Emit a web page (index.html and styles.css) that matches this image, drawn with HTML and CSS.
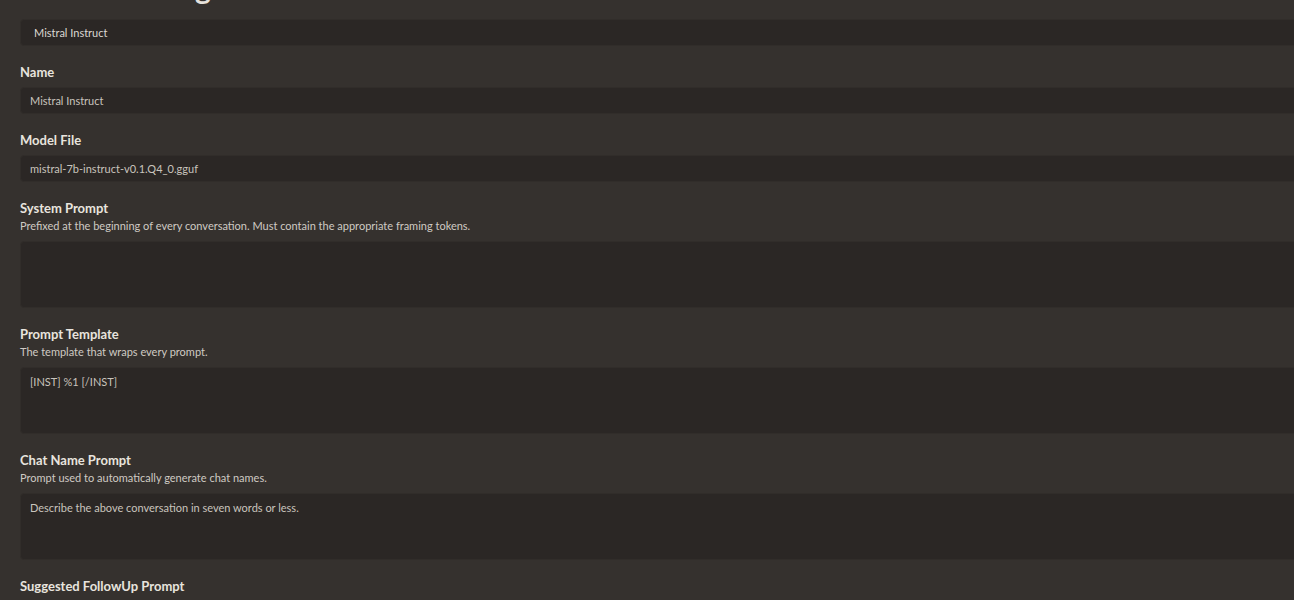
FILE: index.html
```html
<!DOCTYPE html>
<html>
<head>
<meta charset="utf-8">
<link rel="stylesheet" href="styles.css">
</head>
<body>
<main class="page">
  <h1 class="title">Model Settings</h1>
  <div class="box select">Mistral Instruct</div>

  <section class="field">
    <div class="label">Name</div>
    <div class="box">Mistral Instruct</div>
  </section>

  <section class="field">
    <div class="label">Model File</div>
    <div class="box">mistral-7b-instruct-v0.1.Q4_0.gguf</div>
  </section>

  <section class="field">
    <div class="label">System Prompt</div>
    <div class="desc">Prefixed at the beginning of every conversation. Must contain the appropriate framing tokens.</div>
    <div class="box area"></div>
  </section>

  <section class="field">
    <div class="label">Prompt Template</div>
    <div class="desc">The template that wraps every prompt.</div>
    <div class="box area">[INST] %1 [/INST]</div>
  </section>

  <section class="field">
    <div class="label">Chat Name Prompt</div>
    <div class="desc">Prompt used to automatically generate chat names.</div>
    <div class="box area">Describe the above conversation in seven words or less.</div>
  </section>

  <section class="field">
    <div class="label">Suggested FollowUp Prompt</div>
  </section>
</main>
</body>
</html>
```

FILE: styles.css
```css
html, body {
  margin: 0;
  padding: 0;
  background: #35312e;
  overflow: hidden;
  height: 600px;
}
body {
  font-family: Lato, "Noto Sans", sans-serif;
  color: #e6e2dc;
}
.page {
  width: 1300px;
  padding-left: 20px;
  display: flex;
  flex-direction: column;
}
.title {
  margin: -31px 0 0 0;
  font-size: 30px;
  line-height: 36px;
  height: 36px;
  font-weight: 700;
  color: #e6e2dc;
  padding-left: 4px;
}
.box {
  box-sizing: border-box;
  background: #2b2725;
  border: 1px solid #312d2a;
  border-radius: 4px;
  height: 27px;
  padding: 0 9px;
  font-size: 11px;
  line-height: 25px;
  color: #c9c4bd;
}
.select {
  margin-top: 14px;
  padding-left: 13px;
  color: #dcd8d2;
}
.field {
  margin-top: 18px;
  display: flex;
  flex-direction: column;
}
.label {
  font-size: 13px;
  font-weight: 700;
  line-height: 16px;
  color: #e8e4de;
}
.desc {
  font-size: 11px;
  line-height: 16px;
  margin-top: 2px;
  color: #cfcac3;
}
.field .box {
  margin-top: 7px;
}
.area {
  height: 67px;
  line-height: 14px;
  padding-top: 7px;
}
```
